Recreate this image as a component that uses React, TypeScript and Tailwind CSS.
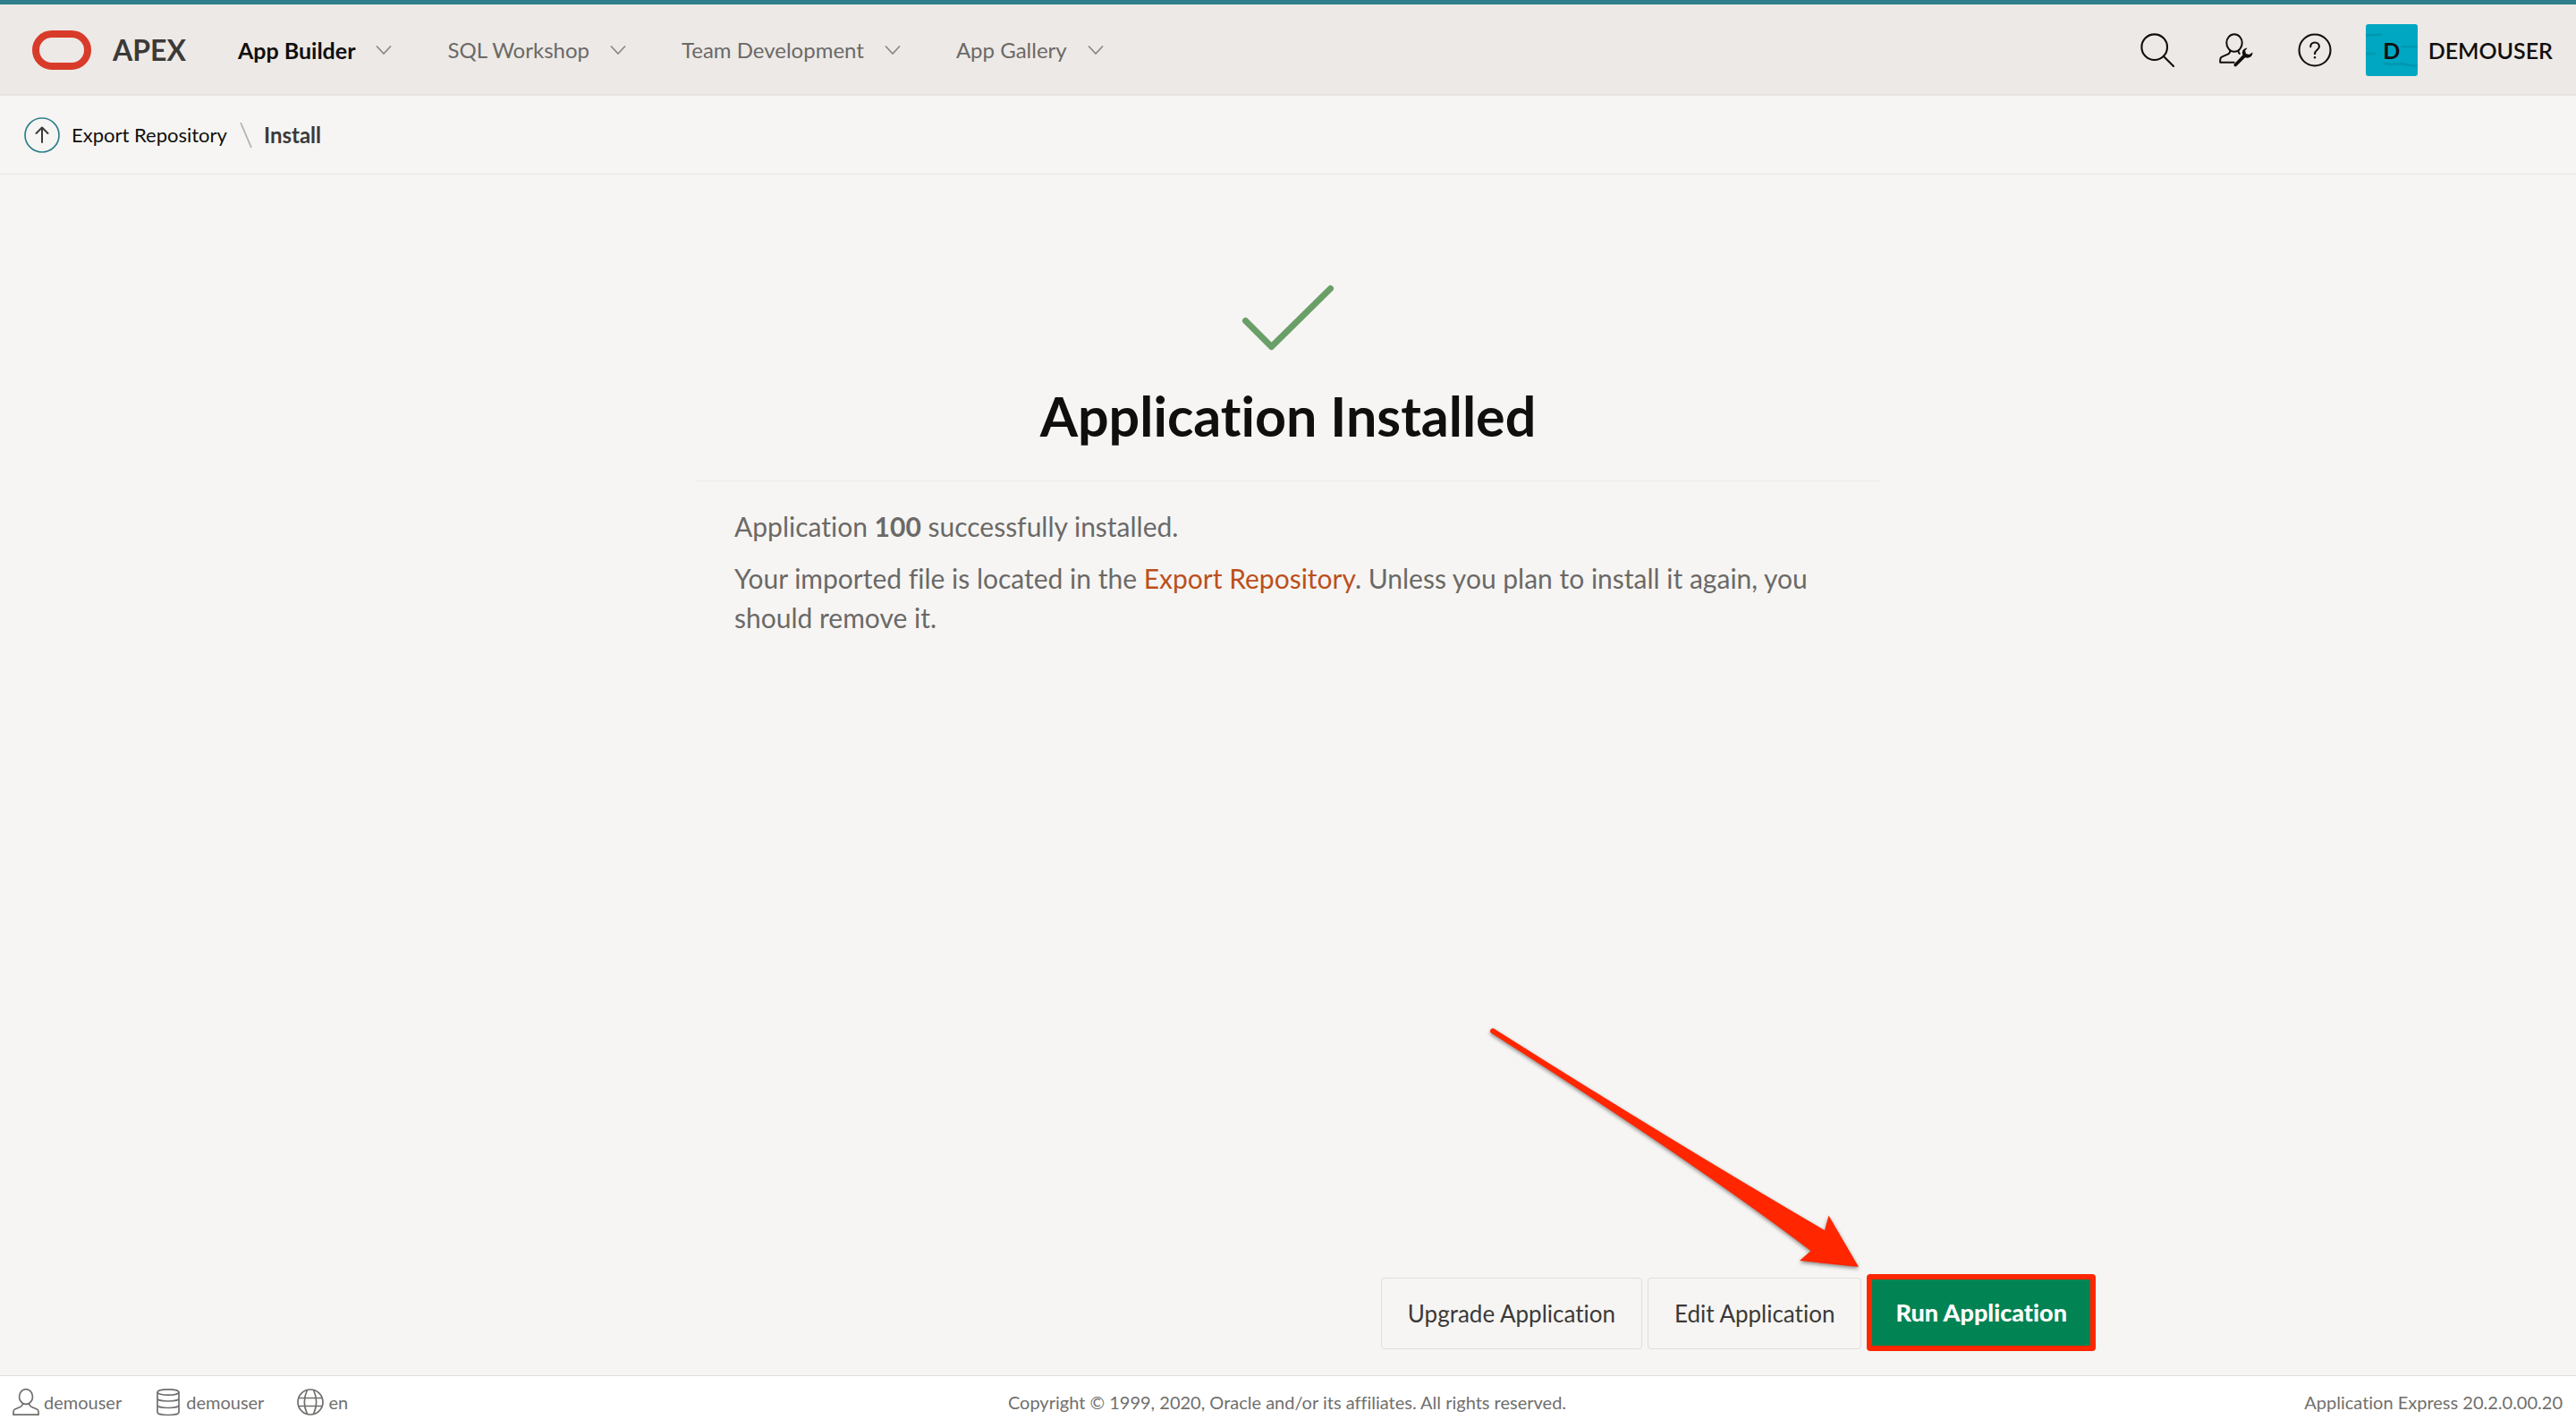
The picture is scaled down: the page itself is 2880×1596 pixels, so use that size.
import type { ReactNode } from "react";

const navItems = [
  { label: "App Builder", active: true },
  { label: "SQL Workshop", active: false },
  { label: "Team Development", active: false },
  { label: "App Gallery", active: false },
];

function OracleMark() {
  return (
    <svg className="h-11 w-[66px]" viewBox="0 0 66 44" fill="none" aria-hidden="true">
      <rect x="4" y="4" width="58" height="36" rx="18" stroke="#d83b2a" strokeWidth="8" />
    </svg>
  );
}

function Chevron() {
  return (
    <svg className="h-[10px] w-[18px]" viewBox="0 0 18 10" fill="none" stroke="#8b8785" strokeWidth="1.7" strokeLinecap="round" aria-hidden="true">
      <path d="M1.5 1l7.5 8 7.5-8" />
    </svg>
  );
}

function SearchIcon() {
  return (
    <svg className="size-[38px]" viewBox="0 0 38 38" fill="none" stroke="#100f0e" strokeWidth="2.1" strokeLinecap="round" aria-hidden="true">
      <circle cx="15.700" cy="15.700" r="14.300" />
      <path d="M26 26l11 11" />
    </svg>
  );
}

function AdminIcon() {
  return (
    <svg className="size-[38px]" viewBox="0 0 38 38" fill="none" stroke="#100f0e" strokeWidth="2" strokeLinejoin="round" strokeLinecap="round" aria-hidden="true">
      <ellipse cx="17" cy="11" rx="8.700" ry="9.700" />
      <path d="M12.300 19.800c0 2.100-.8 3-2.600 3.800l-6.300 2.800C1.900 27.100 1.200 28.400 1.200 30.300v2.500h15.500" />
      <path d="M21.500 20c0 1.200.4 2.200 1.300 2.900" />
      <path
        d="M31.600 16.800c-4.200-.3-7 3.700-5.200 7.600l-9.600 10.100c-1.200 1.400 1 3.900 2.500 2.600l9.900-9.800c3.900 1.300 8.500-.9 8.200-5.700l-3.800 2.500-3.600-1.200-.9-3.400z"
        fill="#100f0e"
        stroke="none"
      />
    </svg>
  );
}

function HelpIcon() {
  return (
    <svg className="size-[38px]" viewBox="0 0 38 38" fill="none" stroke="#100f0e" strokeWidth="2.100" strokeLinecap="round" aria-hidden="true">
      <circle cx="19" cy="19" r="17.500" />
      <path d="M14.200 15.200c0-2.900 2-4.700 4.800-4.700s4.900 1.800 4.900 4.500c0 3.800-4.900 3.700-4.900 8.200" />
      <circle cx="19" cy="27.300" r="0.600" fill="#100f0e" strokeWidth="1.400" />
    </svg>
  );
}

function AvatarTexture() {
  return (
    <svg className="absolute inset-0 size-full" viewBox="0 0 60 60" fill="none" stroke="#0098b1" strokeWidth="3" aria-hidden="true">
      <path d="M0 13c6-1 11 0 18-1M41 26h19M0 34h11" />
      <path d="M20 45c8 3 16 0 24 1 6 1 10 3 16 2" />
    </svg>
  );
}

function UpIcon() {
  return (
    <svg className="size-10" viewBox="0 0 40 40" fill="none" strokeLinecap="round" strokeLinejoin="round" aria-hidden="true">
      <circle cx="20" cy="20" r="19" stroke="#2f7f8c" strokeWidth="1.700" />
      <path d="M20 28V12M13.500 18L20 11.500 26.500 18" stroke="#3c3a38" strokeWidth="2" />
    </svg>
  );
}

function UserIcon() {
  return (
    <svg className="size-8" viewBox="0 0 32 32" fill="none" stroke="#716f6d" strokeWidth="1.700" strokeLinejoin="round" aria-hidden="true">
      <ellipse cx="16" cy="10" rx="7.500" ry="8.400" />
      <path d="M12.300 17.600c0 1.900-.7 2.900-2.200 3.600l-6.400 2.800C2.400 24.600 2 25.500 2 27v3.200h28V27c0-1.500-.4-2.400-1.700-3l-6.400-2.800c-1.500-.7-2.200-1.700-2.200-3.600" />
    </svg>
  );
}

function DatabaseIcon() {
  return (
    <svg className="size-8" viewBox="0 0 32 32" fill="none" stroke="#716f6d" strokeWidth="1.700" aria-hidden="true">
      <ellipse cx="16" cy="5" rx="12" ry="3.200" />
      <path d="M4 5v22.500c0 1.700 5.400 3 12 3s12-1.300 12-3V5M4 12c0 1.700 5.400 3 12 3s12-1.300 12-3M4 19.500c0 1.700 5.400 3 12 3s12-1.300 12-3" />
    </svg>
  );
}

function GlobeIcon() {
  return (
    <svg className="size-8" viewBox="0 0 32 32" fill="none" stroke="#716f6d" strokeWidth="1.700" aria-hidden="true">
      <circle cx="16" cy="16" r="14" />
      <path d="M3 11.500h26M3 20.500h26M12.500 2.500c-4 8.500-4 18.500 0 27M19.500 2.500c4 8.500 4 18.500 0 27" />
    </svg>
  );
}

function PointerArrow() {
  return (
    <svg
      className="pointer-events-none absolute right-full bottom-full h-[285px] w-[430px] overflow-visible drop-shadow-[0_2px_2px_rgba(0,0,0,0.45)]"
      viewBox="20 20 430 285"
      aria-hidden="true"
    >
      <path
        d="M33 30.500Q230 155 403 256L407.500 239.500 441 297 375 290 387.500 279Q250 175 30 35.500A3 3 0 0 1 33 30.500Z"
        fill="#ff2600"
      />
    </svg>
  );
}

function FooterItem({ icon, children }: { icon: ReactNode; children: ReactNode }) {
  return (
    <li className="flex items-center gap-1">
      {icon}
      <span>{children}</span>
    </li>
  );
}

export default function App() {
  return (
    <div className="flex min-h-screen flex-col bg-[#f6f5f3] font-['Lato',sans-serif] text-[#100f0e] [font-variant-ligatures:no-common-ligatures]">
      <header className="flex h-[107px] items-center border-t-[5px] border-b-2 border-t-[#307e8b] border-b-[#e6e2df] bg-[#ede9e6] pt-[2px] pr-[26px] pl-9">
        <a href="#home" className="flex items-center gap-6">
          <OracleMark />
          <span className="text-[32px] leading-10 font-bold text-[#3c3a38]">APEX</span>
        </a>
        <nav className="ml-[58px] flex items-center gap-[62px]">
          {navItems.map((item) => (
            <button key={item.label} type="button" className="flex items-center gap-[23px] whitespace-nowrap">
              <span className={item.active ? "text-[25px] leading-8 font-bold" : "text-[24px] leading-8 text-[#6b6967]"}>
                {item.label}
              </span>
              <Chevron />
            </button>
          ))}
        </nav>
        <div className="ml-auto flex items-center">
          <div className="flex items-center gap-[50px]">
            <button type="button" aria-label="Search"><SearchIcon /></button>
            <button type="button" aria-label="Administration"><AdminIcon /></button>
            <button type="button" aria-label="Help"><HelpIcon /></button>
          </div>
          <button type="button" className="ml-[38px] flex items-center gap-3">
            <span className="relative flex size-[58px] items-center justify-center rounded-[3px] bg-[#00a7c2]">
              <AvatarTexture />
              <span className="relative text-[25px] leading-8 font-bold">D</span>
            </span>
            <span className="text-[25px] leading-8 font-semibold">DEMOUSER</span>
          </button>
        </div>
      </header>

      <nav aria-label="Breadcrumb" className="flex h-[88px] items-center border-b border-[#e6e4e2] pl-[27px] leading-8">
        <a href="#up" aria-label="Up one level">
          <UpIcon />
        </a>
        <a href="#export-repository" className="ml-[13px] text-[22px]">Export Repository</a>
        <svg className="ml-[14px] h-7 w-[14px]" viewBox="0 0 14 28" stroke="#b5b2b0" strokeWidth="1.800" aria-hidden="true">
          <path d="M1 0l12 28" />
        </svg>
        <span className="ml-[13px] text-[24px] font-bold text-[#3c3a38]">Install</span>
      </nav>

      <main className="flex flex-1 flex-col pt-24">
        <section className="mx-auto w-full max-w-[1322px]">
          <svg className="mx-auto size-32" viewBox="0 0 128 128" fill="none" stroke="#6a9f67" strokeWidth="7" strokeLinecap="round" strokeLinejoin="round" aria-hidden="true">
            <path d="M16.500 67.500l29 29 66-65" />
          </svg>
          <h1 className="mt-[10px] text-center text-[61px] leading-[72px] font-bold">Application Installed</h1>
          <div className="mt-9 flex flex-col gap-[14px] border-t border-[#eae9e6] px-[42px] pt-7 text-[30px] leading-[44px] text-[#6b6967]">
            <p>
              Application <strong className="font-bold">100</strong> successfully installed.
            </p>
            <p>
              Your imported file is located in the{" "}
              <a href="#export-repository" className="text-[#bb501c]">Export Repository</a>. Unless you plan to install it again, you
              should remove it.
            </p>
          </div>
        </section>

        <div className="mx-auto mt-auto flex w-full max-w-[1806px] items-end justify-end gap-[6px] pb-[27px] text-[26px]">
          <button type="button" className="mb-[2px] h-20 rounded-[4px] border border-[#dfdedb] px-[29px] text-[#3c3a38]">Upgrade Application</button>
          <button type="button" className="mb-[2px] h-20 rounded-[4px] border border-[#dfdedb] px-[29px] text-[#3c3a38]">Edit Application</button>
          <div className="relative">
            <PointerArrow />
            <button type="button" className="h-[86px] rounded-[4px] border-[6px] border-[#ff2600] bg-[#028353] px-[26px] text-[27px] font-black text-white">
              Run Application
            </button>
          </div>
        </div>
      </main>

      <footer className="grid h-[59px] grid-cols-[1fr_auto_1fr] items-center border-t border-[#dfdfdf] bg-white pr-[15px] pl-[13px] text-[20px] leading-7 text-[#716f6d]">
        <ul className="flex gap-9">
          <FooterItem icon={<UserIcon />}>demouser</FooterItem>
          <FooterItem icon={<DatabaseIcon />}>demouser</FooterItem>
          <FooterItem icon={<GlobeIcon />}>en</FooterItem>
        </ul>
        <p>Copyright © 1999, 2020, Oracle and/or its affiliates. All rights reserved.</p>
        <p className="text-right">Application Express 20.2.0.00.20</p>
      </footer>
    </div>
  );
}
